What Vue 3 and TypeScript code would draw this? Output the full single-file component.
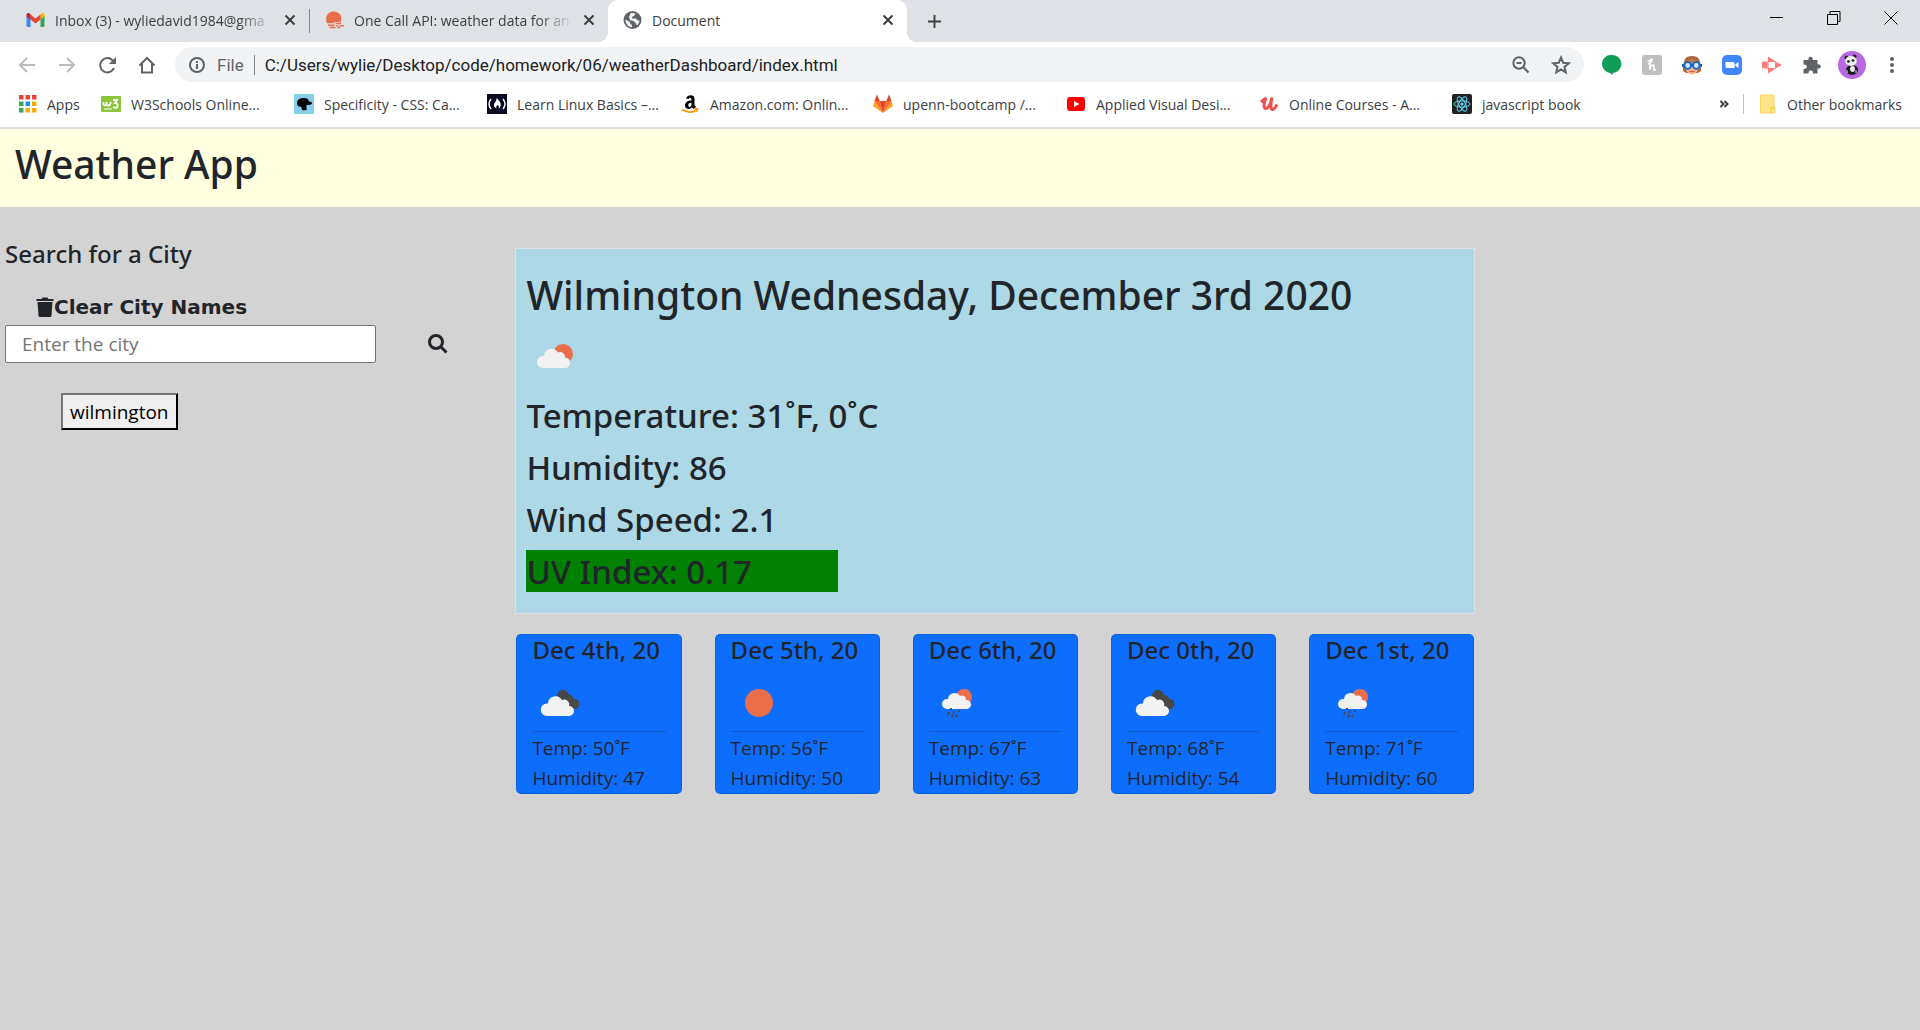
<script setup lang="ts">
import { ref } from 'vue'

type Sky = 'clouds' | 'sun' | 'rain'

interface Day {
  date: string
  sky: Sky
  temp: number
  humidity: number
}

const city = ref('')
const address = ref('C:/Users/wylie/Desktop/code/homework/06/weatherDashboard/index.html')
const history = ref<string[]>(['wilmington'])

const bookmarks: { id: string; label: string }[] = [
  { id: 'w3', label: 'W3Schools Online...' },
  { id: 'css', label: 'Specificity - CSS: Ca...' },
  { id: 'fcc', label: 'Learn Linux Basics –...' },
  { id: 'amazon', label: 'Amazon.com: Onlin...' },
  { id: 'gitlab', label: 'upenn-bootcamp /...' },
  { id: 'youtube', label: 'Applied Visual Desi...' },
  { id: 'udemy', label: 'Online Courses - A...' },
  { id: 'react', label: 'javascript book' }
]

const appColors = ['#ea4335', '#ea4335', '#ea4335', '#34a853', '#1a8cff', '#fbab05', '#34a853', '#fbab05', '#fbab05']

const days: Day[] = [
  { date: 'Dec 4th, 20', sky: 'clouds', temp: 50, humidity: 47 },
  { date: 'Dec 5th, 20', sky: 'sun', temp: 56, humidity: 50 },
  { date: 'Dec 6th, 20', sky: 'rain', temp: 67, humidity: 63 },
  { date: 'Dec 0th, 20', sky: 'clouds', temp: 68, humidity: 54 },
  { date: 'Dec 1st, 20', sky: 'rain', temp: 71, humidity: 60 }
]

function search() {
  const name = city.value.trim()
  if (name) history.value.push(name)
  city.value = ''
}
</script>

<template>
  <div class="window">
    <header class="chrome">
      <div class="tabstrip">
        <div class="tab first">
          <svg class="favicon" viewBox="0 0 18 18">
            <path d="M0 4.500V14.500q0 1.500 1.500 1.500H4V7z" fill="#4285f4" />
            <path d="M18 4.500V14.500q0 1.500-1.500 1.500H14V7z" fill="#34a853" />
            <path d="M14 3.500v5l4-3V4c0-2-2-2.500-3-1.500z" fill="#fbbc04" />
            <path d="M4 8.500v-5l5 4 5-4v5l-5 4z" fill="#ea4335" />
            <path d="M0 4v1.500l4 3v-5L3 2.500C2 1.500 0 2 0 4z" fill="#c5221f" />
          </svg>
          <span class="tab-title faded-end">Inbox (3) - wyliedavid1984@gma</span>
          <button class="close" aria-label="Close tab"><svg viewBox="0 0 12 12"><path d="M1.500 1.500l9 9M10.500 1.500l-9 9" /></svg></button>
        </div>
        <div class="tab second">
          <svg class="favicon" viewBox="0 0 20 18">
            <path d="M2 12.500C-1 3 5 0 9 0c6 0 10 5 7.500 11H10v1.500z" fill="#eb6e4b" />
            <path d="M3 14.500h7M5 17h6M11 12.700h6M12 15h2M15.500 15H20M13 17h3" stroke="#eb6e4b" stroke-width="1.600" fill="none" />
          </svg>
          <span class="tab-title faded-end">One Call API: weather data for an</span>
          <button class="close" aria-label="Close tab"><svg viewBox="0 0 12 12"><path d="M1.500 1.500l9 9M10.500 1.500l-9 9" /></svg></button>
        </div>
        <div class="tab active">
          <svg class="favicon" viewBox="0 0 18 18">
            <circle cx="9" cy="9" r="9" fill="#5f6368" />
            <path d="M2 8.500l4.500 2.500v1.500L8.500 14v2.300C4.500 16 1.800 12.500 2 8.500zM7 2.200c2-.5 3.500-.2 5 .5L11 4.500 8.500 6v1.500h4l1.500 2h2c-.3 2-1 3.700-2.500 5L12 12l-2-2-3.500-.8L5.500 6z" fill="#fff" opacity=".9" />
          </svg>
          <span class="tab-title">Document</span>
          <button class="close" aria-label="Close tab"><svg viewBox="0 0 12 12"><path d="M1.500 1.500l9 9M10.500 1.500l-9 9" /></svg></button>
        </div>
        <button class="new-tab" aria-label="New tab"><svg viewBox="0 0 16 16"><path d="M8 1v14M1 8h14" /></svg></button>
        <div class="window-buttons">
          <button aria-label="Minimize"><svg viewBox="0 0 14 14"><path d="M0 6.500h13" /></svg></button>
          <button aria-label="Restore"><svg viewBox="0 0 14 14"><path d="M.500 3.500h10v10h-10zM3 3.500v-3h10v10h-2.500" /></svg></button>
          <button aria-label="Close"><svg viewBox="0 0 14 14"><path d="M.500.500l13 13M13.500.500l-13 13" /></svg></button>
        </div>
      </div>

      <div class="toolbar">
        <nav class="nav-buttons">
          <button aria-label="Back"><svg viewBox="0 0 20 20" class="faded"><path d="M18 10H3M10 3l-7 7 7 7" /></svg></button>
          <button aria-label="Forward"><svg viewBox="0 0 20 20" class="faded"><path d="M2 10h15M10 3l7 7-7 7" /></svg></button>
          <button aria-label="Reload"><svg viewBox="0 0 20 20"><path d="M17 13A7.200 7.200 0 1 1 15.500 5.200l1.500 1.500" /><path d="M19 2v7h-7z" fill="#5f6368" stroke="none" /></svg></button>
          <button aria-label="Home"><svg viewBox="0 0 20 20"><path d="M2.500 10.500L10 3l7.500 7.500M5 9v8.500h10V9" /></svg></button>
        </nav>
        <div class="omnibox">
          <svg class="info" viewBox="0 0 18 18"><circle cx="9" cy="9" r="7" /><path d="M9 8v5M9 5v2" /></svg>
          <label class="scheme" for="address">File</label>
          <input id="address" v-model="address" class="address" type="text" />
          <svg class="omni-icon" viewBox="0 0 20 20"><circle cx="8" cy="8" r="5.700" /><path d="M5.500 8h5M12.300 12.300l5.200 5.200" /></svg>
          <svg class="omni-icon" viewBox="0 0 20 20"><path d="M10 2.500l2.200 5.200 5.600.5-4.300 3.700 1.300 5.500-4.800-2.900-4.800 2.900 1.300-5.500-4.300-3.700 5.600-.5z" /></svg>
        </div>
        <div class="extensions">
          <button aria-label="Hangouts"><svg viewBox="0 0 20 20"><path d="M10 0a9 9 0 0 1 .8 18L10.500 20 8 17.900A9 9 0 0 1 10 0z" fill="#0f9d58" /></svg></button>
          <button aria-label="Honey"><svg viewBox="0 0 20 20"><rect width="20" height="20" rx="3" fill="#bfbfbf" /><path d="M6 9c4-1 5-5 3.500-5S8 8 7.800 15c.5-3 2-5 3.500-5s.2 3 .5 4.500 1.500.5 2-.5M5.500 6H9" fill="none" stroke="#fff" stroke-width="1.500" /></svg></button>
          <button aria-label="Goggles"><svg viewBox="0 0 20 20">
            <path d="M1 16C1 5 3 1 10 1s9 4 9 15l-3 2H4z" fill="#a9673c" />
            <ellipse cx="10" cy="12" rx="6.500" ry="7.500" fill="#f5b58b" />
            <path d="M3 8c2-4 9-4 11-2l3 3z" fill="#b9764a" />
            <path d="M0 10.500h20" stroke="#1b62b5" stroke-width="3" />
            <circle cx="5.700" cy="10.500" r="3.300" fill="#cfeaff" stroke="#1569c7" stroke-width="1.800" />
            <circle cx="14.300" cy="10.500" r="3.300" fill="#cfeaff" stroke="#1569c7" stroke-width="1.800" />
            <path d="M7.500 16.500h5" stroke="#e0506a" stroke-width="1.200" />
          </svg></button>
          <button aria-label="Zoom"><svg viewBox="0 0 20 20"><rect width="20" height="20" rx="5" fill="#4087fc" /><path d="M3.500 7H11q1.500 0 1.500 1.500V13H5q-1.500 0-1.500-1.500zM13.300 9.200L16.500 7v6l-3.200-2.200z" fill="#fff" /></svg></button>
          <button aria-label="Screen recorder"><svg viewBox="0 0 20 20"><path d="M0 6.500h5.500v7H0zM6 1.500l7 4.500H6zM6 18.500l7-4.500H6zM13.500 6.500L20 10l-6.500 3.500z" fill="#ff7b7b" /><path d="M6 6.500h7.500v7H6z" fill="#fff" stroke="#ff7b7b" stroke-width="1" /></svg></button>
          <button aria-label="Extensions"><svg viewBox="0 0 20 20"><path d="M1.500 5H6.500C5.500.5 11.500.5 10.800 5H15.500V9.200C20 8.500 20 14 15.500 13.500V18.500H11C11.500 14 6 14 6.500 18.500H1.500V14C6 14.500 6 9 1.500 9.500z" fill="#5f6368" /></svg></button>
          <button aria-label="Profile" class="profile"><svg viewBox="0 0 28 28">
            <circle cx="14" cy="14" r="14" fill="#b868e0" />
            <ellipse cx="14" cy="19" rx="6" ry="5" fill="#16181c" /><ellipse cx="14.500" cy="18" rx="2.500" ry="3" fill="#e8e8e8" />
            <circle cx="8.500" cy="6.500" r="2" fill="#222" /><circle cx="16.500" cy="5.500" r="2" fill="#222" />
            <ellipse cx="13" cy="10" rx="5.800" ry="5" fill="#eef2ee" />
            <ellipse cx="10.500" cy="10.500" rx="1.500" ry="1.200" fill="#222" /><ellipse cx="15" cy="9.500" rx="1.500" ry="1.200" fill="#222" />
            <path d="M9 22v-3M18 22v-3" stroke="#e8e8e8" />
          </svg></button>
          <button aria-label="Menu"><svg viewBox="0 0 20 20" fill="#5f6368"><circle cx="10" cy="4" r="2" /><circle cx="10" cy="10" r="2" /><circle cx="10" cy="16" r="2" /></svg></button>
        </div>
      </div>

      <nav class="bookmarks">
        <a href="#" class="apps">
          <svg viewBox="0 0 18 18"><rect v-for="(c, i) in appColors" :key="i" :x="(i % 3) * 6.500" :y="Math.floor(i / 3) * 6.500" width="4.500" height="4.500" :fill="c" /></svg>
          Apps
        </a>
        <a v-for="b in bookmarks" :key="b.id" href="#" class="bookmark">
          <svg viewBox="0 0 20 20">
            <template v-if="b.id === 'w3'">
              <rect y="2" width="20" height="16" rx="1" fill="#8cc63f" />
              <path d="M2.500 8v2.500q1.500 2 3 0V8M5.500 10.500q1.500 2 3.500 0L10 8M12 6h4l-2 3q3 0 2.500 3t-4.500 1" fill="none" stroke="#fff" stroke-width="1.800" />
              <path d="M3 15h8" stroke="#fff" />
            </template>
            <template v-else-if="b.id === 'css'">
              <rect width="20" height="20" fill="#87ceeb" />
              <path d="M3 9.500C3 5 7 3.500 11 4c2.500.3 3.500 1.500 4 3.500 2 .3 3.500 1 3.200 2C17.500 11 15 11 12.500 11c-.5 1.500 0 3 .5 4.500-2 1-3.500 1-5 .5-.3-1.500-.5-2.500-1-3.500-2 .5-4-.5-4-3z" fill="#000" />
            </template>
            <template v-else-if="b.id === 'fcc'">
              <rect width="20" height="20" fill="#0a0a23" />
              <path d="M4 5q-4 5 0 10M16 5q4 5 0 10" fill="none" stroke="#fff" stroke-width="1.400" />
              <path d="M9.500 4c3 3 5 5 4 8-.5 2-2 2.500-2 2.500s1-2-.5-3.500c-2 1-2 2-1.500 3.500C6.500 13 6 11 8 8.500c1.500-2 1.500-3 1.500-4.500z" fill="#fff" />
            </template>
            <template v-else-if="b.id === 'amazon'">
              <path d="M6 4.500C7 0 14.500 0 14.500 4.500V11l1.500 2-2.500 2-1.700-1.800C10 16 5 15.500 5 11.500 5 8.500 7.500 6.500 11.500 6.500 11.500 3 9 3 8.700 5zM11.500 8.700C9 8.500 8.300 10 8.300 11.200c0 2.500 3.200 2.300 3.200-1z" fill="#000" />
              <path d="M2 15.500q8 5 15 .5M14.500 15l3-.2-1 3" fill="none" stroke="#f90" stroke-width="1.700" />
            </template>
            <template v-else-if="b.id === 'gitlab'">
              <path d="M10 19L0 12l1.500-5z" fill="#fca326" /><path d="M10 19l10-7-1.500-5z" fill="#fca326" />
              <path d="M1.500 7h5.200L10 19zM18.500 7h-5.200L10 19z" fill="#fc6d26" />
              <path d="M6.700 7h6.600L10 19z" fill="#e24329" />
              <path d="M1.500 7L4 .500 6.700 7zM18.500 7L16 .500 13.300 7z" fill="#e24329" />
            </template>
            <template v-else-if="b.id === 'youtube'">
              <rect y="3" x="1" width="18" height="14" rx="3" fill="#f00" /><path d="M8 7l5.500 3L8 13z" fill="#fff" />
            </template>
            <template v-else-if="b.id === 'udemy'">
              <path d="M2 8l5-4c-3 7-2 11 0 10.500S11.500 10 13 3.500c-1.500 7-1.500 12 .5 12s3.500-3 4.500-5" fill="none" stroke="#ec5252" stroke-width="3" />
            </template>
            <template v-else>
              <rect width="20" height="20" rx="2" fill="#222" />
              <g fill="none" stroke="#61dafb"><ellipse cx="10" cy="10" rx="8" ry="3.200" /><ellipse cx="10" cy="10" rx="8" ry="3.200" transform="rotate(60 10 10)" /><ellipse cx="10" cy="10" rx="8" ry="3.200" transform="rotate(120 10 10)" /></g>
              <circle cx="10" cy="10" r="1.500" fill="#61dafb" />
            </template>
          </svg>
          {{ b.label }}
        </a>
        <button class="overflow" aria-label="More bookmarks"><svg viewBox="0 0 10 10"><path d="M1.500 2L4.500 5l-3 3M5.500 2l3 3-3 3" /></svg></button>
        <a href="#" class="others">
          <svg viewBox="0 0 16 20"><path d="M1.500 1h12q1 0 1 1v11l1 1v4l-1 1h-13q-.500 0-.500-.500V1.500z" fill="#ffe58a" stroke="#fbd65c" /><path d="M11.500 19v-5h3.500" fill="none" stroke="#fbcf46" stroke-width="1.500" /></svg>
          Other bookmarks
        </a>
      </nav>
    </header>

    <div class="page">
      <header class="banner"><h1>Weather App</h1></header>
      <div class="layout">
        <aside class="sidebar">
          <h5><label for="city">Search for a City</label></h5>
          <button class="clear" @click="history = []">
            <svg viewBox="0 0 18 20"><path d="M.500 2h5l1-1.500h5l1 1.500h5v2H.500zM1.500 5h15l-1 13.500q0 1.500-1.500 1.500H4q-1.500 0-1.500-1.500z" fill="#212529" /></svg>Clear City Names
          </button>
          <form class="search" @submit.prevent="search">
            <input id="city" v-model="city" type="text" placeholder="Enter the city" />
            <button aria-label="Search"><svg viewBox="0 0 20 20"><circle cx="8" cy="8" r="6.500" /><path d="M13 13l5.500 5.500" /></svg></button>
          </form>
          <ul class="history">
            <li v-for="name in history" :key="name"><button>{{ name }}</button></li>
          </ul>
        </aside>

        <main class="content">
          <section class="current">
            <h2>Wilmington Wednesday, December 3rd 2020</h2>
            <svg class="sky" viewBox="0 0 56 56">
              <circle cx="36" cy="26" r="10" fill="#eb6e4b" />
              <path d="M16 40a6 6 0 0 1 0-12h1a7.500 7.500 0 0 1 14-3.500 5 5 0 0 1 7 5 5 5 0 0 1 0 10.500z" fill="#f2f2f2" />
            </svg>
            <h3>Temperature: 31˚F, 0˚C</h3>
            <h3>Humidity: 86</h3>
            <h3>Wind Speed: 2.1</h3>
            <h3 class="uv">UV Index: 0.17</h3>
          </section>
          <div class="forecast">
            <article v-for="d in days" :key="d.date" class="day">
              <h5>{{ d.date }}</h5>
              <svg class="sky" viewBox="0 0 56 56">
                <template v-if="d.sky === 'clouds'">
                  <path d="M25 22a6 6 0 0 1 12-2 5 5 0 0 1 5 4 4.500 4.500 0 0 1 1 10H30z" fill="#484848" />
                  <path d="M15 41a6 6 0 0 1 0-12.500h1a7.500 7.500 0 0 1 14-3.500 5 5 0 0 1 7 6 5 5 0 0 1 0 10z" fill="#f2f2f2" />
                </template>
                <circle v-else-if="d.sky === 'sun'" cx="28" cy="28" r="14" fill="#eb6e4b" />
                <template v-else>
                  <circle cx="35" cy="22" r="8" fill="#eb6e4b" />
                  <path d="M18 34a5 5 0 0 1 0-10h1a6.500 6.500 0 0 1 12-3 4 4 0 0 1 6 4 4.500 4.500 0 0 1 1 9z" fill="#f2f2f2" />
                  <path d="M22 33v2M20 37l-1 3M25 36l-1 2M30 35v2M24 39.500l-1 3M28 40l-1 2" stroke="#484848" stroke-width="1.800" />
                </template>
              </svg>
              <hr />
              <p>Temp: {{ d.temp }}˚F</p>
              <p>Humidity: {{ d.humidity }}</p>
            </article>
          </div>
        </main>
      </div>
    </div>
  </div>
</template>

<style>
body {
  margin: 0;
  background: lightgrey;
}
</style>

<style scoped>
* {
  box-sizing: border-box;
}
button {
  border: 0;
  padding: 0;
  background: none;
  font: inherit;
  color: inherit;
}
a {
  color: inherit;
  text-decoration: none;
}
svg {
  display: block;
  flex: none;
}
.window {
  font-family: "Open Sans", "Noto Sans", sans-serif;
  color: #212529;
}

/* browser frame */
.chrome {
  background: #fff;
  border-bottom: 2px solid #dadce0;
  font-size: 14px;
  color: #3c4043;
}
.tabstrip {
  display: flex;
  height: 42px;
  background: #dee1e6;
}
.tab {
  display: flex;
  align-items: center;
  gap: 10px;
  flex: 0 1 298px;
  min-width: 0;
  padding: 0 13px 2px 15px;
  position: relative;
}
.tab.first {
  flex-basis: 310px;
  padding-right: 14px;
  padding-left: 26px;
}
.tab.first::after {
  content: "";
  position: absolute;
  right: 0;
  top: 9px;
  width: 1px;
  height: 24px;
  background: #80868b;
}
.tab.active {
  flex-basis: 299px;
  background: #fff;
  border-radius: 10px 10px 0 0;
}
.tab.active::before,
.tab.active::after {
  content: "";
  position: absolute;
  bottom: 0;
  width: 10px;
  height: 10px;
}
.tab.active::before {
  right: 100%;
  background: radial-gradient(circle at 0 0, #dee1e6 10px, #fff 10px);
}
.tab.active::after {
  left: 100%;
  background: radial-gradient(circle at 100% 0, #dee1e6 10px, #fff 10px);
}
.favicon {
  width: 19px;
  height: 18px;
}
.tab-title {
  flex: 1;
  white-space: nowrap;
}
.faded-end {
  mask-image: linear-gradient(to right, #000 calc(100% - 36px), transparent);
}
.close svg {
  width: 12px;
  height: 12px;
  stroke: #3c4043;
  stroke-width: 2;
}
.new-tab {
  width: 54px;
  display: grid;
  place-items: center;
}
.new-tab svg {
  width: 15px;
  height: 15px;
  stroke: #3c4043;
  stroke-width: 2;
}
.window-buttons {
  display: flex;
  margin: 0 1px 0 auto;
  height: 36px;
}
.window-buttons button {
  width: 57px;
  display: grid;
  place-items: center;
}
.window-buttons svg {
  width: 14px;
  height: 14px;
  fill: none;
  stroke: #000;
}
.toolbar {
  display: flex;
  align-items: center;
  padding: 5px 8px 5px 17px;
}
.nav-buttons {
  display: flex;
  gap: 20px;
  margin-right: 18px;
}
.nav-buttons svg {
  width: 20px;
  height: 20px;
  fill: none;
  stroke: #5f6368;
  stroke-width: 2;
}
.nav-buttons .faded {
  stroke: #babcbe;
}
.omnibox {
  flex: 1;
  display: flex;
  align-items: center;
  height: 35px;
  padding: 0 13px;
  border-radius: 18px;
  background: #f1f3f4;
  font: 17px Roboto, "Open Sans", sans-serif;
}
.info {
  width: 18px;
  height: 18px;
  fill: none;
  stroke: #5f6368;
  stroke-width: 2;
}
.scheme {
  margin: 0 10px 0 11px;
  padding-right: 10px;
  border-right: 1px solid #80868b;
  color: #5f6368;
}
.address {
  flex: 1;
  min-width: 0;
  padding: 0;
  border: 0;
  background: none;
  font: inherit;
  color: #202124;
  outline: 0;
}
.omni-icon {
  width: 20px;
  height: 20px;
  margin-left: 20px;
  fill: none;
  stroke: #5f6368;
  stroke-width: 2;
}
.extensions {
  display: flex;
  align-items: center;
  margin-left: 8px;
}
.extensions button {
  width: 40px;
  display: grid;
  place-items: center;
}
.extensions svg {
  width: 20px;
  height: 20px;
}
.extensions .profile svg {
  width: 28px;
  height: 28px;
}
.bookmarks {
  display: flex;
  align-items: center;
  height: 40px;
  padding: 0 18px 6px 19px;
  white-space: nowrap;
}
.bookmarks a {
  display: flex;
  align-items: center;
  gap: 10px;
}
.bookmarks .apps {
  flex: 0 0 82px;
}
.bookmarks svg {
  width: 20px;
  height: 20px;
}
.bookmarks .apps svg {
  width: 18px;
  height: 18px;
}
.bookmarks .bookmark {
  flex: 0 1 193px;
  min-width: 0;
}
.overflow {
  margin-left: auto;
  padding-right: 14px;
}
.bookmarks .overflow svg {
  width: 10px;
  height: 10px;
  fill: none;
  stroke: #3c4043;
  stroke-width: 2;
}
.bookmarks .others {
  gap: 11px;
  padding-left: 15px;
  border-left: 1px solid #bdc1c6;
}
.bookmarks .others svg {
  width: 17px;
}

/* weather page */
h1,
h2,
h3,
h5,
p {
  margin: 0;
}
h1,
h2,
h3,
h5 {
  font-family: "Noto Sans", "Open Sans", sans-serif;
  font-weight: 500;
}
h1,
h2 {
  font-size: 39px;
  line-height: 48px;
}
h3 {
  padding-top: 2px;
  font-size: 33px;
  line-height: 40px;
  margin-bottom: 10px;
}
h5 {
  font-size: 24px;
  line-height: 30px;
}
p {
  font-size: 19px;
  line-height: 30px;
}
.banner {
  padding: 11px 15px 19px;
  background: lightyellow;
}
.layout {
  display: flex;
  align-items: flex-start;
}
.sidebar {
  width: calc(27% - 3px);
  padding: 32px 5px 0;
}
.sidebar h5 {
  margin-bottom: 23px;
}
.clear {
  display: flex;
  align-items: center;
  margin-left: 31px;
  height: 30px;
  font: bold 20px "DejaVu Sans", sans-serif;
}
.clear svg {
  width: 18px;
  height: 20px;
}
.search {
  display: flex;
  align-items: center;
  margin-top: 3px;
}
.search input {
  width: 371px;
  height: 38px;
  padding: 0 16px;
  border: 1px solid #767676;
  border-radius: 2px;
  background: #fff;
  font: 19px "Open Sans", "Noto Sans", sans-serif;
  color: #212529;
}
.search input::placeholder {
  color: #757575;
}
.search button {
  margin-left: 52px;
}
.search svg {
  width: 20px;
  height: 20px;
  fill: none;
  stroke: #212529;
  stroke-width: 3;
}
.history {
  margin: 30px 0 0 56px;
  padding: 0;
  list-style: none;
}
.history button {
  height: 37px;
  padding: 0 7px;
  border: 2px outset #767676;
  border-color: #767676 #212121 #212121 #767676;
  background: #efefef;
  font-size: 19px;
  color: #000;
}
.content {
  width: 50%;
  padding-top: 41px;
}
.current {
  padding: 22px 11px 11px 10px;
  border: 1px solid #dee2e6;
  background: lightblue;
}
.sky {
  width: 56px;
  height: 56px;
}
.current .sky {
  margin: 9px 0 10px 1px;
}
.uv {
  width: 312px;
  max-width: 100%;
  background: green;
}
.forecast {
  display: flex;
  gap: 33px;
  margin: 20px 1px 0 1px;
}
.day {
  flex: 1;
  min-width: 0;
  padding: 0 15px;
  border: 1px solid rgba(0, 0, 0, 0.125);
  border-radius: 5px;
  background: #0d6efd;
}
.day h5 {
  white-space: nowrap;
}
.day .sky {
  margin-top: 10px;
}
.day hr {
  height: 1px;
  margin: 0 0 1px;
  border: 0;
  background: rgba(33, 37, 41, 0.25);
}
</style>
